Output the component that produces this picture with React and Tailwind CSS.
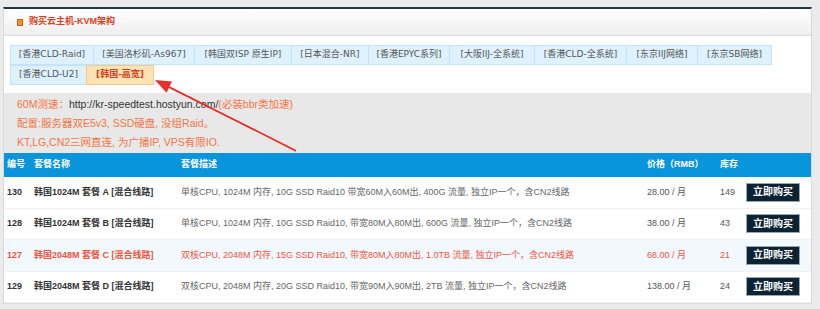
const tabs = [
  { label: '[香港CLD-Raid]', w: 'w-[84px]' },
  { label: '[美国洛杉矶-As967]', w: 'w-[102px]' },
  { label: '[韩国双ISP 原生IP]', w: 'w-[98px]' },
  { label: '[日本混合-NR]', w: 'w-[78px]' },
  { label: '[香港EPYC系列]', w: 'w-[82px]' },
  { label: '[大阪IIJ-全系统]', w: 'w-[86px]' },
  { label: '[香港CLD-全系统]', w: 'w-[93px]' },
  { label: '[东京IIJ网络]', w: 'w-[72px]' },
  { label: '[东京SB网络]', w: 'w-[75px]' },
  { label: '[香港CLD-U2]', w: 'w-[77px]' },
];

const plans = [
  {
    id: '130',
    name: '韩国1024M 套餐 A [混合线路]',
    desc: '单核CPU, 1024M 内存, 10G SSD Raid10 带宽60M入60M出, 400G 流量, 独立IP一个，含CN2线路',
    price: '28.00 / 月',
    stock: '149',
  },
  {
    id: '128',
    name: '韩国1024M 套餐 B [混合线路]',
    desc: '单核CPU, 1024M 内存, 10G SSD Raid10, 带宽80M入80M出, 600G 流量, 独立IP一个，含CN2线路',
    price: '38.00 / 月',
    stock: '43',
  },
  {
    id: '127',
    name: '韩国2048M 套餐 C [混合线路]',
    desc: '双核CPU, 2048M 内存, 15G SSD Raid10, 带宽80M入80M出, 1.0TB 流量, 独立IP一个，含CN2线路',
    price: '68.00 / 月',
    stock: '21',
    hot: true,
  },
  {
    id: '129',
    name: '韩国2048M 套餐 D [混合线路]',
    desc: '双核CPU, 2048M 内存, 20G SSD Raid10, 带宽90M入90M出, 2TB 流量, 独立IP一个，含CN2线路',
    price: '138.00 / 月',
    stock: '24',
  },
];

const cols = 'grid grid-cols-[27px_147px_466px_73px_26px_1fr] items-center pl-[3px]';

function Arrow() {
  // red annotation arrow pointing at the active tab
  return (
    <svg className="absolute inset-0 pointer-events-none" width="820" height="309">
      <polygon points="155,80 166.5,92.8 172,81.6" fill="#e8302a" />
      <polygon points="168.6,85.9 170,88.6 296.4,150.6 296,150" fill="#e8302a" />
      <line x1="169" y1="87" x2="296" y2="151" stroke="#e8302a" strokeWidth="1.4" />
    </svg>
  );
}

export default function App() {
  return (
    <div
      className="relative w-[820px] h-[309px] overflow-hidden bg-[#ebebeb] pt-[7px] pl-[3px]"
      style={{ fontFamily: '"Liberation Sans", "Noto Sans CJK SC", sans-serif' }}
    >
      <div className="w-[809px] bg-white border-t-2 border-t-[#1d3a4c] border-x border-x-[#d8d8d8] border-b border-b-[#dcdcdc]">
        <div className="h-[27px] flex items-center pl-[13px] gap-[6px] bg-gradient-to-b from-white to-[#eeeeee] border-b border-[#dedede]">
          <span className="w-[6px] h-[7px] bg-[#f3902f] border border-[#cf5c12]" />
          <span className="text-[9px] font-bold text-[#d9401c]">购买云主机-KVM架构</span>
        </div>

        <div
          className="flex flex-wrap pt-[9px] pl-[6px] pb-[8px] pr-[30px]"
          style={{ fontFamily: '"DejaVu Sans", "Noto Sans CJK SC", sans-serif' }}
        >
          {tabs.map((t) => (
            <div
              key={t.label}
              className={`${t.w} h-[20px] -mr-px flex items-center justify-center bg-[#def1fc] border border-[#c3e3f6] text-[9px] text-[#555]`}
            >
              {t.label}
            </div>
          ))}
          <div className="w-[68px] h-[20px] flex items-center justify-center bg-[#fde2b4] border border-[#f3c98c] text-[9px] font-bold text-[#d23f1c]">
            [韩国-高宽]
          </div>
        </div>

        <div className="bg-[#e8e8e8] pl-[13px] pt-[2px] pb-[1px] text-[10.5px] leading-[19px] text-[#f47444]">
          <div>
            60M测速：<span className="text-[#333]">http://kr-speedtest.hostyun.com/</span>(必装bbr类加速)
          </div>
          <div>配置:服务器双E5v3, SSD硬盘, 没组Raid。</div>
          <div>KT,LG,CN2三网直连, 为广播IP, VPS有限IO.</div>
        </div>

        <div className={`${cols} h-[24px] bg-[#0995dc] text-white text-[9px] font-bold`}>
          <span>编号</span>
          <span>套餐名称</span>
          <span>套餐描述</span>
          <span>价格（RMB）</span>
          <span>库存</span>
          <span />
        </div>

        {plans.map((p) => (
          <div
            key={p.id}
            className={`${cols} h-[31.5px] border-b border-[#f1f1f1] text-[9px] ${
              p.hot ? 'bg-[#f2f9fd] text-[#f0533d]' : 'text-[#666]'
            }`}
          >
            <span className={`font-bold ${p.hot ? '' : 'text-[#333]'}`}>{p.id}</span>
            <span className={`font-bold ${p.hot ? '' : 'text-[#333]'}`}>{p.name}</span>
            <span className="whitespace-nowrap">{p.desc}</span>
            <span className={p.hot ? '' : 'text-[#555]'}>{p.price}</span>
            <span className={p.hot ? '' : 'text-[#555]'}>{p.stock}</span>
            <button className="w-[54px] h-[19px] bg-[#0b2333] border border-[#9aa7ae] text-white text-[10px] font-bold leading-none">
              立即购买
            </button>
          </div>
        ))}
      </div>
      <Arrow />
    </div>
  );
}
